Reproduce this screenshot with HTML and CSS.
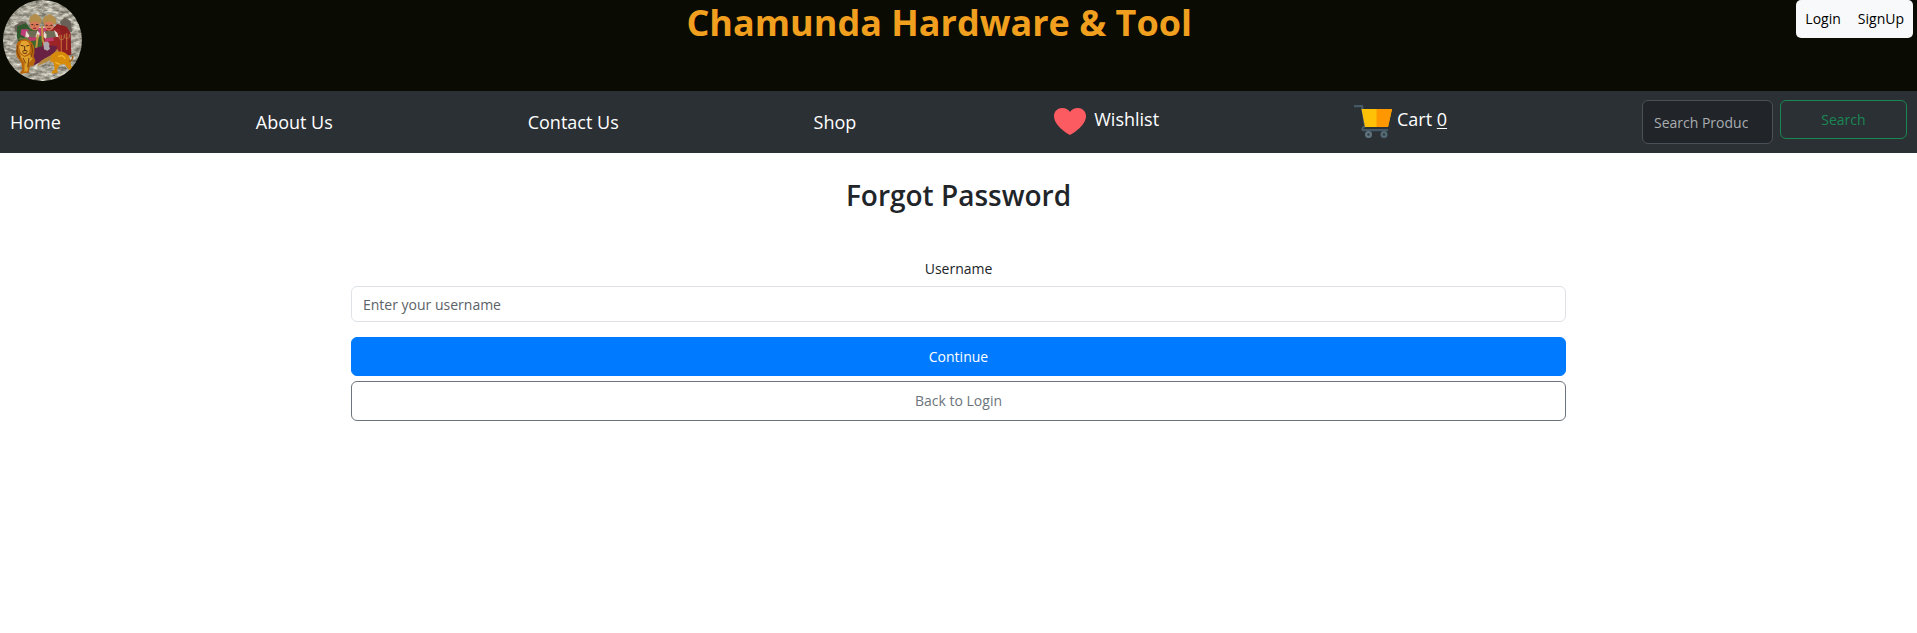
FILE: index.html
```html
<!DOCTYPE html>
<html lang="en">
<head>
<meta charset="utf-8">
<meta name="viewport" content="width=device-width, initial-scale=1">
<title>Forgot Password - Chamunda Hardware &amp; Tool</title>
<link rel="stylesheet" href="styles.css">
</head>
<body>
<header class="top">
  <svg class="logo" viewBox="9 0 237 243" preserveAspectRatio="none" role="img" aria-label="Chamunda emblem">
    <defs>
      <filter id="stone" x="0" y="0" width="100%" height="100%" color-interpolation-filters="sRGB">
        <feTurbulence type="fractalNoise" baseFrequency="0.05 0.1" numOctaves="4" seed="7"/>
        <feColorMatrix values="0.8 0 0 0 0.26  0.8 0 0 0 0.25  0.8 0 0 0 0.2  0 0 0 0 1"/>
      </filter>
    </defs>
    <rect x="9" y="0" width="237" height="243" filter="url(#stone)"/>
    <path d="M43 78l22-14 14 2 2 24-34 6zM180 66l14-14 18 12 4 32-26-2z" fill="#696158"/>
    <path d="M52 78l26-8 14 18-2 32-34 10-6-22z" fill="#31572c"/>
    <path d="M172 72l28 8 12 20 2 64-26 6-40-26-6-42z" fill="#8d1f20"/>
    <path d="M74 86h50l8 28-10 42H94l-22-34z" fill="#42662f"/>
    <path d="M126 86h54l4 30-8 54h-50z" fill="#9c2427"/>
    <path d="M64 88l20 0 8 16-14 8-16-8zM112 84l26 0 0 18-22 8z" fill="#bd3d79"/>
    <path d="M80 94l36-2-4 20-30 2zM132 94l32-2 4 20-32 4z" fill="#6f6c55"/>
    <path d="M78 92l10 14-4 16-8-8zM112 92l8 8-6 16-8-4zM132 94l8 10-2 14-8-8zM162 90l10 8 4 14-8-2z" fill="#e6dbcf"/>
    <path d="M82 112l28 0 6 8-30 4zM134 116l26-4 2 10-26 4z" fill="#c13a6d"/>
    <path d="M88 68q0-20 8-22l12-5 10 8q9 8 5 22zM129 70q-2-18 10-23l11-5 12 8q10 8 6 22z" fill="#b38d4a"/>
    <path d="M90 69q14-9 28 0l1 9q-2 13-14 13-13-1-15-14zM133 69q14-8 27 0l1 10q-2 13-14 13-12-1-14-14z" fill="#d8795a"/>
    <path d="M94 74h6m8 0h7m22 2h6m8 0h6" stroke="#3c201d" stroke-width="3"/>
    <path d="M104 74v8m43-6v7" stroke="#ad4c3d" stroke-width="2"/>
    <path d="M99 85h10m32 1h11" stroke="#8c1e27" stroke-width="3"/>
    <path d="M126 80l2 40 14 34M113 104l-4 40" stroke="#c69540" stroke-width="6" fill="none"/>
    <path d="M184 104v60m16-64v50" stroke="#bf5d37" stroke-width="4"/>
    <path d="M178 106v10q7 8 14 0v-10M194 102v10q7 8 14 0v-10" stroke="#bd8b45" stroke-width="2" fill="none"/>
    <path d="M94 148q42-16 78-10-4 22-24 30-20 18-46 28-10-18-8-48z" fill="#692143"/>
    <path d="M110 200q12-22 34-30 18-8 28-24l6 12q-12 18-30 24-16 6-38 18z" fill="#b5883e"/>
    <path d="M153 165q20-16 42-7 15 9 16 25l3 18 9 9-4 5-13-7-14-17-13 4-7 12 1 11-18 3 0-6 9-7-3-20-10-4z" fill="#d78b0c"/>
    <path d="M175 170q14-8 21 7M166 187l14 6" stroke="#f3b72b" stroke-width="4" fill="none"/>
    <path d="M207 185q15-7 10-18" stroke="#a66316" stroke-width="4" fill="none"/>
    <path d="M50 144q-4-20 14-25 22-7 32 10 12 17 5 39l5 15-7 16-9 0-4 19-22 3-5-4 8-7-3-20-5-9q-15-11-9-37z" fill="#b8670d"/>
    <path d="M64 124q13-5 23 5l3 16-3 14-13 8-12-8-5-18z" fill="#e4a431"/>
    <path d="M60 162l14 9 16-7 8 13-13 12-2 25-10 1 1-27-10-13z" fill="#dca02c"/>
    <path d="M62 136l9 2m8 0l8-2M74 138v12m-7 4l8-3 8 3M68 158q7 5 13 0" stroke="#58310f" stroke-width="3" fill="none"/>
    <path d="M52 136l-1 20 9 19M94 133l4 20-5 19M69 174l8 16M87 174l-4 28" stroke="#7c420c" stroke-width="3" fill="none"/>
    <path d="M54 119l7-7 9 2 10-3 13 12-17-5z" fill="#6e7442"/>
    <path d="M131 137q-3-8 4-12h9q7 6 3 12l3 10-8 5-10-4z" fill="#aca8ad"/>
  </svg>
  <h1 class="brand">Chamunda Hardware &amp; Tool</h1>
  <div class="account">
    <a href="#login">Login</a>
    <a href="#signup">SignUp</a>
  </div>
</header>
<nav class="nav" aria-label="Main">
  <a class="link" href="#home">Home</a>
  <a class="link" href="#about">About Us</a>
  <a class="link" href="#contact">Contact Us</a>
  <a class="link" href="#shop">Shop</a>
  <a class="link wish" href="#wishlist">
    <svg class="heart" viewBox="0 0 32 27" aria-hidden="true"><path d="M16 27C12 25 0 17 0 8 0 3 4 0 8 0c4 0 7 2 8 4 1-2 4-4 8-4s8 3 8 8c0 9-12 17-16 19z" fill="#fc5b61"/></svg>
    <span>Wishlist</span>
  </a>
  <a class="link cart" href="#cart">
    <svg class="trolley" viewBox="0 0 38 33" aria-hidden="true">
      <path d="M0 1.2h8l3 20q-4 2-2 4h25" fill="none" stroke="#455a64" stroke-width="2.2"/>
      <path d="M7.5 4H38l-4 18H11z" fill="#ffc107"/>
      <path d="M22.5 4H38l-4 18H22.5z" fill="#ff9800"/>
      <circle cx="14.5" cy="29.5" r="3.5" fill="#607580"/><circle cx="30" cy="29.5" r="3.5" fill="#546a75"/>
      <circle cx="14.5" cy="29.5" r="1.3" fill="#344047"/><circle cx="30" cy="29.5" r="1.3" fill="#344047"/>
    </svg>
    <span>Cart <u>0</u></span>
  </a>
  <form class="search" role="search">
    <input type="text" placeholder="Search Products" aria-label="Search Products">
    <button type="button">Search</button>
  </form>
</nav>
<main class="page">
  <h2 class="title">Forgot Password</h2>
  <form class="form">
    <label for="username">Username</label>
    <input id="username" type="text" placeholder="Enter your username">
    <button class="btn primary" type="button">Continue</button>
    <button class="btn outline" type="button">Back to Login</button>
  </form>
</main>
</body>
</html>
```

FILE: styles.css
```css
* { box-sizing: border-box; }

body {
  margin: 0;
  background: #fff;
  color: #212529;
  font: 14px/22px "Open Sans", "Noto Sans", sans-serif;
}

a { color: inherit; text-decoration: none; }
input, button { font: inherit; border-radius: 6px; }
button { cursor: pointer; }

.top {
  display: flex;
  justify-content: space-between;
  align-items: flex-start;
  padding: 0 4px 10px 3px;
  background: #0a0b02;
}

.logo {
  display: block;
  width: 79px;
  height: 81px;
  border-radius: 50%;
}

.brand {
  margin: 0;
  color: #f09f1e;
  font-size: 36px;
  font-weight: 700;
  line-height: 46px;
}

.account {
  display: flex;
  gap: 17px;
  padding: 8px 9px;
  border-radius: 5px;
  background: #f8f9fa;
  color: #000;
}

.nav {
  display: flex;
  justify-content: space-between;
  align-items: flex-start;
  padding: 9px 10px;
  background: #2b3035;
  color: #fff;
}

.link {
  padding: 8px 0;
  font-size: 18px;
  line-height: 28px;
}

.wish, .cart {
  display: flex;
  align-items: flex-start;
  padding: 5px 0;
}

.wish { gap: 8px; padding-left: 3px; }
.cart { gap: 5px; }
.heart { width: 32px; height: 27px; margin-top: 3px; }
.trolley { width: 38px; height: 33px; }
.cart u { text-underline-offset: 2px; }

.search {
  display: flex;
  align-items: flex-start;
  gap: 7px;
}

.search input {
  width: 131px;
  height: 44px;
  padding: 0 24px 0 11px;
  border: 1px solid #495057;
  background: #212529;
  color: #dee2e6;
}

.search input::placeholder { color: #a9adb1; opacity: 1; }

.search button {
  width: 127px;
  height: 39px;
  border: 1px solid #198754;
  background: transparent;
  color: #198754;
}

.page {
  max-width: 1215px;
  margin: 0 auto;
  padding: 24px 0;
  text-align: center;
}

.title {
  margin: 0 0 45px;
  font-size: 28px;
  font-weight: 600;
  line-height: 36px;
}

.form { display: flex; flex-direction: column; }
.form label { margin-bottom: 6px; }

.form input {
  height: 36px;
  margin-bottom: 15px;
  padding: 0 11px;
  border: 1px solid #dee2e6;
  background: #fff;
}

.form input::placeholder { color: #5c6268; opacity: 1; }

.btn {
  height: 39px;
  border: 1px solid #007bff;
}

.primary { margin-bottom: 5px; background: #007bff; color: #fff; }
.outline { height: 40px; border-color: #6c757d; background: #fff; color: #6c757d; }
```
